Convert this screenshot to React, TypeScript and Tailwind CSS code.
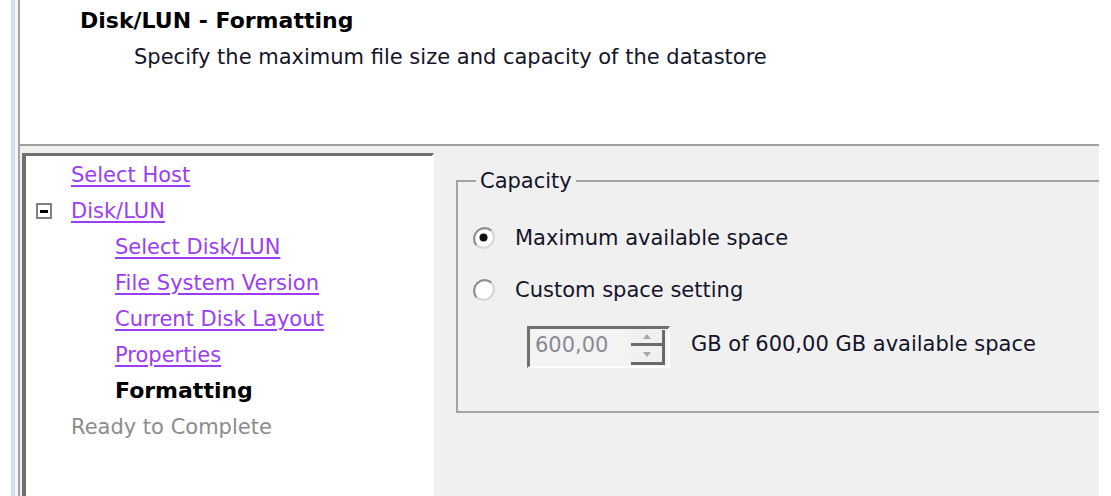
import React from 'react';

type Step = { label: string; depth: number; state: 'link' | 'current' | 'pending'; toggle?: boolean };

const steps: Step[] = [
  { label: 'Select Host', depth: 0, state: 'link' },
  { label: 'Disk/LUN', depth: 0, state: 'link', toggle: true },
  { label: 'Select Disk/LUN', depth: 1, state: 'link' },
  { label: 'File System Version', depth: 1, state: 'link' },
  { label: 'Current Disk Layout', depth: 1, state: 'link' },
  { label: 'Properties', depth: 1, state: 'link' },
  { label: 'Formatting', depth: 1, state: 'current' },
  { label: 'Ready to Complete', depth: 0, state: 'pending' },
];

function Radio({ checked }: { checked?: boolean }) {
  return (
    <svg width="24" height="24" viewBox="0 0 24 24" className="shrink-0">
      <circle cx="12" cy="12" r="10.5" fill="#fff" />
      <path d="M4.6 19.4 A10.5 10.5 0 0 1 19.4 4.6" fill="none" stroke="#8e8e8e" strokeWidth="2.2" />
      <path d="M19.4 4.6 A10.5 10.5 0 0 1 4.6 19.4" fill="none" stroke="#d6d6d6" strokeWidth="2.2" />
      {checked && <circle cx="11.5" cy="11.5" r="4" fill="#111" />}
    </svg>
  );
}

function Spinner({ value }: { value: string }) {
  return (
    <div className="flex h-[42px] w-[143px] border-t-[3px] border-l-[3px] border-b-[2px] border-r-[2px] border-t-[#707070] border-l-[#707070] border-b-white border-r-white bg-[#f3f3f3]">
      <div className="flex flex-1 items-center pb-[6px] pl-[5px] text-[#8a8a98]">{value}</div>
      <div className="mr-[3px] flex w-[34px] flex-col py-[1px]">
        <div className="flex h-[16px] items-center justify-center border-b-[3px] border-r-[3px] border-[#6a6a6a] bg-[#f0f0f0]">
          <svg width="8" height="5" viewBox="0 0 8 5"><path d="M4 0 L8 5 H0 Z" fill="#a8a8a8" /></svg>
        </div>
        <div className="flex flex-1 items-center justify-center border-b-[3px] border-r-[3px] border-[#6a6a6a] bg-[#f0f0f0]">
          <svg width="8" height="5" viewBox="0 0 8 5"><path d="M0 0 H8 L4 5 Z" fill="#a8a8a8" /></svg>
        </div>
      </div>
    </div>
  );
}

export default function App() {
  return (
    <div className="flex h-[496px] w-[1111px] overflow-hidden bg-white font-['DejaVu_Sans',sans-serif] text-[21px] leading-[24px] text-[#14142a]">
      {/* window frame on the left */}
      <div className="w-[11px] bg-white" />
      <div className="w-[4px] bg-[#cfe0f3]" />
      <div className="w-[3px] bg-[#f3f6fa]" />
      <div className="w-[2px] bg-[#a3a3a3]" />

      <div className="flex w-[1079px] flex-col">
        {/* wizard header */}
        <div className="h-[144px] shrink-0 bg-white pt-[9px]">
          <div className="pl-[60px] text-[22px] font-bold text-black">Disk/LUN - Formatting</div>
          <div className="pl-[114px] pt-[12px]">Specify the maximum file size and capacity of the datastore</div>
        </div>
        <div className="h-[2px] shrink-0 bg-[#a0a0a0]" />

        <div className="flex flex-1 bg-[#f0f0f0] pt-[7px]">
          {/* step tree */}
          <div className="ml-[2px] w-[412px] border-t-[3px] border-l-[4px] border-r-[2px] border-t-[#6f6f6f] border-l-[#6f6f6f] border-r-white bg-white">
            <div className="pl-[10px] pt-[1px]">
              {steps.map((s) => (
                <div key={s.label} className="flex h-[36px] items-center">
                  <div className="flex w-[35px] shrink-0 items-center">
                    {s.toggle && (
                      <div className="flex h-[16px] w-[16px] items-center justify-center border-2 border-[#808080] bg-white">
                        <div className="h-[3px] w-[8px] bg-black" />
                      </div>
                    )}
                  </div>
                  <div className={s.depth === 1 ? 'pl-[44px]' : ''}>
                    {s.state === 'link' && (
                      <span className="text-[#9a3df5] underline decoration-2 underline-offset-[3px]">{s.label}</span>
                    )}
                    {s.state === 'current' && <span className="text-[22px] font-bold text-black">{s.label}</span>}
                    {s.state === 'pending' && <span className="text-[#8c8c8c]">{s.label}</span>}
                  </div>
                </div>
              ))}
            </div>
          </div>

          {/* capacity options */}
          <div className="flex-1 pl-[22px] pt-[16px]">
            <fieldset className="border-2 border-r-0 border-[#a3a3a3] pb-[43px]">
              <legend className="ml-[18px] px-[4px]">Capacity</legend>
              <div className="mt-[19px] flex h-[52px] items-center pl-[14px]">
                <Radio checked />
                <span className="ml-[19px]">Maximum available space</span>
              </div>
              <div className="flex h-[52px] items-center pl-[14px]">
                <Radio />
                <span className="ml-[19px]">Custom space setting</span>
              </div>
              <div className="mt-[10px] flex items-center pl-[69px]">
                <Spinner value="600,00" />
                <span className="mb-[7px] ml-[21px]">GB of 600,00 GB available space</span>
              </div>
            </fieldset>
          </div>
        </div>
      </div>
      <div className="flex-1 bg-white" />
    </div>
  );
}
